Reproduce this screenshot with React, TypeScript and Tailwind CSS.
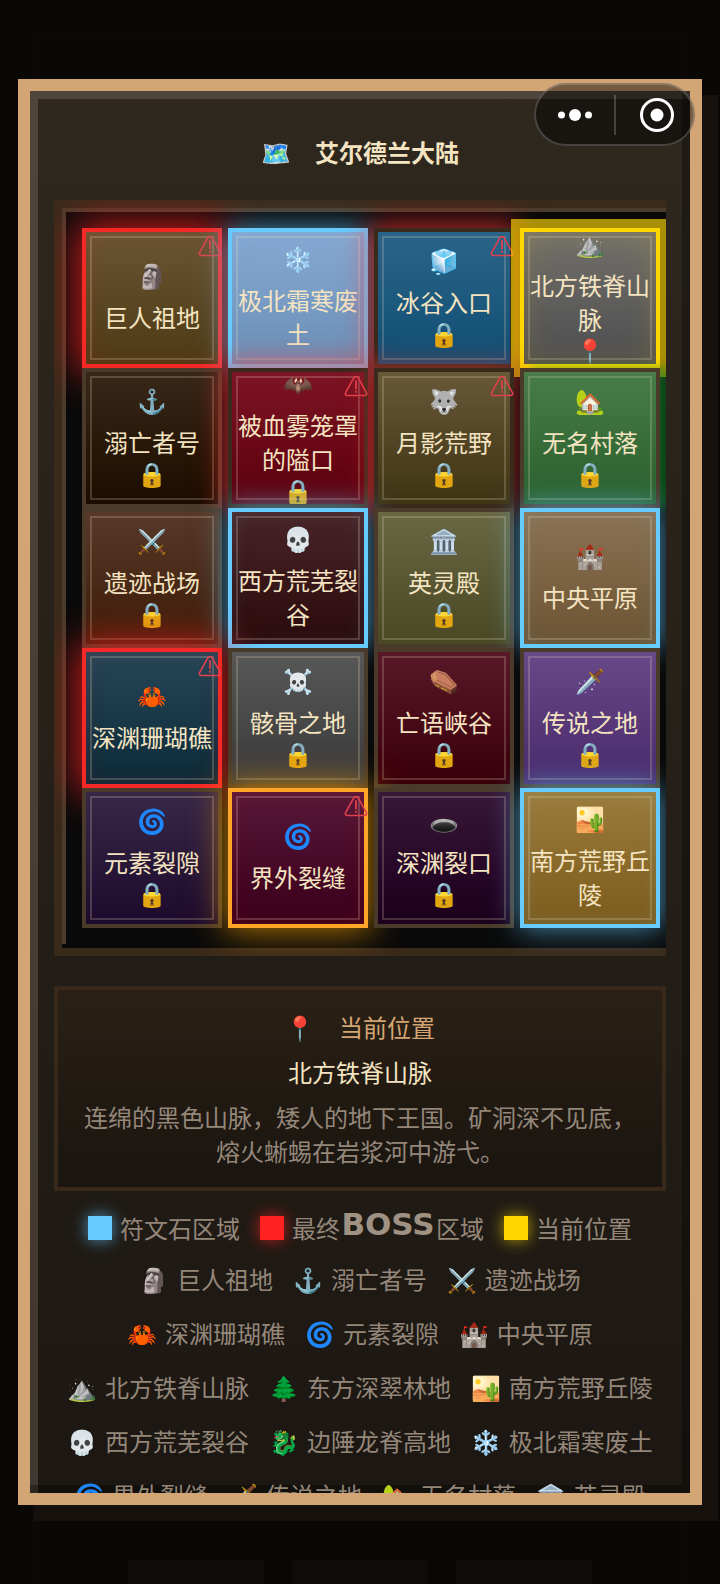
import { clsx } from "clsx";

interface Tile {
  name: string;
  icon: string;
  bg: string;
  frame?: string;
  foot?: string;
  alert?: boolean;
}

const RUNE =
  "border-[#66ccff] shadow-[0_0_28px_rgba(102,204,255,0.7),inset_0_0_20px_rgba(102,204,255,0.12)]";
const BOSS =
  "border-[#f52828] shadow-[0_0_36px_4px_rgba(255,34,34,0.8),inset_0_0_20px_rgba(255,34,34,0.12)]";
const RIFT =
  "border-[#ffa528] shadow-[0_0_32px_2px_rgba(255,165,0,0.7),inset_0_0_20px_rgba(255,34,34,0.12)]";
const HERE =
  "border-[#ffd700] shadow-[0_0_0_9px_rgba(255,215,0,0.65),inset_0_0_30px_rgba(255,215,0,0.15)]";
const DANGER =
  "border-[#3a2a1c] shadow-[0_0_26px_4px_rgba(255,51,51,0.7)]";
const MOON = "border-[#3a2a1c] shadow-[0_0_24px_2px_rgba(220,51,51,0.6)]";
const VILLAGE =
  "border-[#4a3a2a] shadow-[10px_0_10px_rgba(20,130,40,0.6)]";
const PLAIN = "border-[#4a3a2a]";

const TILES: Tile[] = [
  { name: "巨人祖地", icon: "🗿", bg: "from-[#6b5534] to-[#4e3a14]", frame: BOSS, alert: true },
  { name: "极北霜寒废土", icon: "❄️", bg: "from-[#86a8d2] to-[#6a90b8]", frame: RUNE },
  { name: "冰谷入口", icon: "🧊", bg: "from-[#2a6488] to-[#104e74]", frame: DANGER, foot: "🔒", alert: true },
  { name: "北方铁脊山脉", icon: "⛰️", bg: "from-[#72706a] to-[#4e4e50]", frame: HERE, foot: "📍" },
  { name: "溺亡者号", icon: "⚓", bg: "from-[#38281a] to-[#1c0c00]", foot: "🔒" },
  { name: "被血雾笼罩的隘口", icon: "🦇", bg: "from-[#7c1424] to-[#5c000c]", frame: DANGER, foot: "🔒", alert: true },
  { name: "月影荒野", icon: "🐺", bg: "from-[#685838] to-[#3e3414]", frame: MOON, foot: "🔒", alert: true },
  { name: "无名村落", icon: "🏡", bg: "from-[#487c48] to-[#2a602e]", frame: VILLAGE, foot: "🔒" },
  { name: "遗迹战场", icon: "⚔️", bg: "from-[#583828] to-[#3c1c08]", foot: "🔒" },
  { name: "西方荒芜裂谷", icon: "💀", bg: "from-[#482428] to-[#2a0a0c]", frame: RUNE },
  { name: "英灵殿", icon: "🏛️", bg: "from-[#6a6844] to-[#4a4824]", foot: "🔒" },
  { name: "中央平原", icon: "🏰", bg: "from-[#8c7254] to-[#6c5434]", frame: RUNE },
  { name: "深渊珊瑚礁", icon: "🦀", bg: "from-[#264658] to-[#0c2a38]", frame: BOSS, alert: true },
  { name: "骸骨之地", icon: "☠️", bg: "from-[#585858] to-[#3a3a3a]", foot: "🔒" },
  { name: "亡语峡谷", icon: "⚰️", bg: "from-[#581828] to-[#3a000a]", foot: "🔒" },
  { name: "传说之地", icon: "🗡️", bg: "from-[#684888] to-[#4a2a6c]", foot: "🔒" },
  { name: "元素裂隙", icon: "🌀", bg: "from-[#382848] to-[#1c0a2c]", foot: "🔒" },
  { name: "界外裂缝", icon: "🌀", bg: "from-[#581838] to-[#3a001a]", frame: RIFT, alert: true },
  { name: "深渊裂口", icon: "🕳️", bg: "from-[#381838] to-[#1c001c]", foot: "🔒" },
  { name: "南方荒野丘陵", icon: "🏜️", bg: "from-[#9c7c3c] to-[#7c5c1c]", frame: RUNE },
];

const LEGEND = [
  ["🗿", "巨人祖地"],
  ["⚓", "溺亡者号"],
  ["⚔️", "遗迹战场"],
  ["🦀", "深渊珊瑚礁"],
  ["🌀", "元素裂隙"],
  ["🏰", "中央平原"],
  ["⛰️", "北方铁脊山脉"],
  ["🌲", "东方深翠林地"],
  ["🏜️", "南方荒野丘陵"],
  ["💀", "西方荒芜裂谷"],
  ["🐉", "边陲龙脊高地"],
  ["❄️", "极北霜寒废土"],
  ["🌀", "界外裂缝"],
  ["🗡️", "传说之地"],
  ["🏡", "无名村落"],
  ["🏛️", "英灵殿"],
];

function AlertIcon() {
  return (
    <svg
      viewBox="0 0 24 22"
      className="absolute -right-1 top-1 h-[22px] w-6"
      fill="none"
      stroke="#e0404c"
      strokeWidth="1.6"
      strokeLinejoin="round"
      strokeLinecap="round"
    >
      <path d="M9.8 1.9 1.6 16.6a2 2 0 0 0 1.7 2.9h17.4a2 2 0 0 0 1.7-2.9L14.2 1.9a2.5 2.5 0 0 0-4.4 0Z" />
      <path d="M12 5v7.5M12 15.4v.6" strokeWidth="1.8" />
    </svg>
  );
}

function MapTile({ name, icon, bg, frame, foot, alert }: Tile) {
  return (
    <button
      type="button"
      className={clsx(
        "relative h-[140px] w-[140px] border-4 bg-linear-to-b",
        bg,
        frame ?? PLAIN,
      )}
    >
      <span className="flex h-full flex-col items-center justify-center overflow-hidden pb-1">
        <span className="mb-2 h-[34px] shrink-0 leading-[34px]">{icon}</span>
        <span className="shrink-0 px-1 leading-[34px]">{name}</span>
        {foot && (
          <span className="h-[30px] shrink-0 leading-7">{foot}</span>
        )}
      </span>
      <span className="absolute inset-1 border-2 border-[#ffebc8]/20" />
      {alert && <AlertIcon />}
    </button>
  );
}

function Swatch({
  color,
  children,
}: {
  color: string;
  children: React.ReactNode;
}) {
  return (
    <li className="flex h-7 items-center gap-2">
      <span className={clsx("size-6", color)} />
      <span className="flex items-center">{children}</span>
    </li>
  );
}

function Capsule() {
  return (
    <div className="absolute right-[25px] top-[83px] flex h-[63px] w-[161px] items-center rounded-full border-2 border-white/20 bg-black/45">
      <button type="button" aria-label="更多" className="flex w-[78px] justify-center">
        <svg viewBox="0 0 34 12" className="h-3 w-[34px]" fill="#fff">
          <circle cx="3.5" cy="6" r="3.5" />
          <circle cx="17" cy="6" r="6" />
          <circle cx="30.5" cy="6" r="3.5" />
        </svg>
      </button>
      <span className="h-10 w-0.5 bg-white/20" />
      <button type="button" aria-label="关闭" className="flex flex-1 justify-center pl-1">
        <svg viewBox="0 0 34 34" className="size-[34px]">
          <circle cx="17" cy="17" r="15.5" fill="none" stroke="#fff" strokeWidth="3" />
          <circle cx="17" cy="17" r="6.5" fill="#fff" />
        </svg>
      </button>
    </div>
  );
}

export default function App() {
  return (
    <div className="relative h-screen overflow-hidden bg-[#090805] px-[18px] py-[79px] font-['Noto_Sans_CJK_SC','Noto_Color_Emoji',sans-serif] text-2xl">
      <div className="absolute inset-x-8 bottom-0 top-8 border-8 border-b-0 border-[#0d0906]">
        <div className="absolute inset-x-22 bottom-0 flex h-6 gap-7">
          <span className="flex-1 bg-[#0e0b08]" />
          <span className="flex-1 bg-[#0e0b08]" />
          <span className="flex-1 bg-[#0e0b08]" />
        </div>
      </div>

      <main className="relative h-full border-12 border-[#d4a574] bg-linear-to-b from-[#2e281f] to-[#1c1712] shadow-[16px_16px_0_#16110d]">
        <div className="h-full overflow-hidden px-6 shadow-[inset_-8px_-8px_0_rgba(0,0,0,0.3),inset_8px_8px_0_rgba(255,225,205,0.16)]">
          <h1 className="flex h-[109px] items-center justify-center gap-6 pt-3 font-bold text-[#f4e4c1]">
            <span>🗺️</span>
            <span>艾尔德兰大陆</span>
          </h1>

          <div className="overflow-hidden">
            <div className="w-max border-8 border-[#3a2a1a] bg-[#0a0a0a] p-5 text-[#f4e4c1] shadow-[inset_-4px_-4px_0_#0a0a0a,inset_4px_4px_0_#4a3b2c]">
              <div className="grid grid-cols-4 gap-x-1.5">
                {TILES.map((t) => (
                  <MapTile key={t.name} {...t} />
                ))}
              </div>
            </div>
          </div>

          <section className="mt-[30px] h-[205px] border-4 border-[#38291b] bg-linear-to-b from-[#2a2015] to-[#1a1510] px-5 pt-[18px] text-center">
            <h2 className="flex h-[38px] items-center justify-center gap-6 text-[#d4a574]">
              <span>📍</span>
              <span>当前位置</span>
            </h2>
            <p className="mt-2 leading-9 text-[#f4e4c1]">北方铁脊山脉</p>
            <p className="mt-2.5 leading-[34px] text-[#94877a]">
              连绵的黑色山脉，矮人的地下王国。矿洞深不见底，熔火蜥蜴在岩浆河中游弋。
            </p>
          </section>

          <ul className="mt-[23px] flex flex-wrap justify-center gap-5 leading-[34px] text-[#94877a]">
            <Swatch color="bg-[#66ccff] shadow-[0_0_16px_rgba(102,204,255,0.7)]">
              符文石区域
            </Swatch>
            <Swatch color="bg-[#ff2222] shadow-[0_0_16px_rgba(255,34,34,0.7)]">
              最终
              <span className="w-24 pb-2 text-center font-['DejaVu_Sans'] text-[31px] font-bold leading-7 text-[#a09282]">
                BOSS
              </span>
              区域
            </Swatch>
            <Swatch color="bg-[#ffd700] shadow-[0_0_16px_rgba(255,215,0,0.7)]">
              当前位置
            </Swatch>
            {LEGEND.map(([icon, name]) => (
              <li key={name} className="flex h-[34px] items-center gap-2">
                <span>{icon}</span>
                <span>{name}</span>
              </li>
            ))}
          </ul>
        </div>
      </main>

      <Capsule />
    </div>
  );
}
